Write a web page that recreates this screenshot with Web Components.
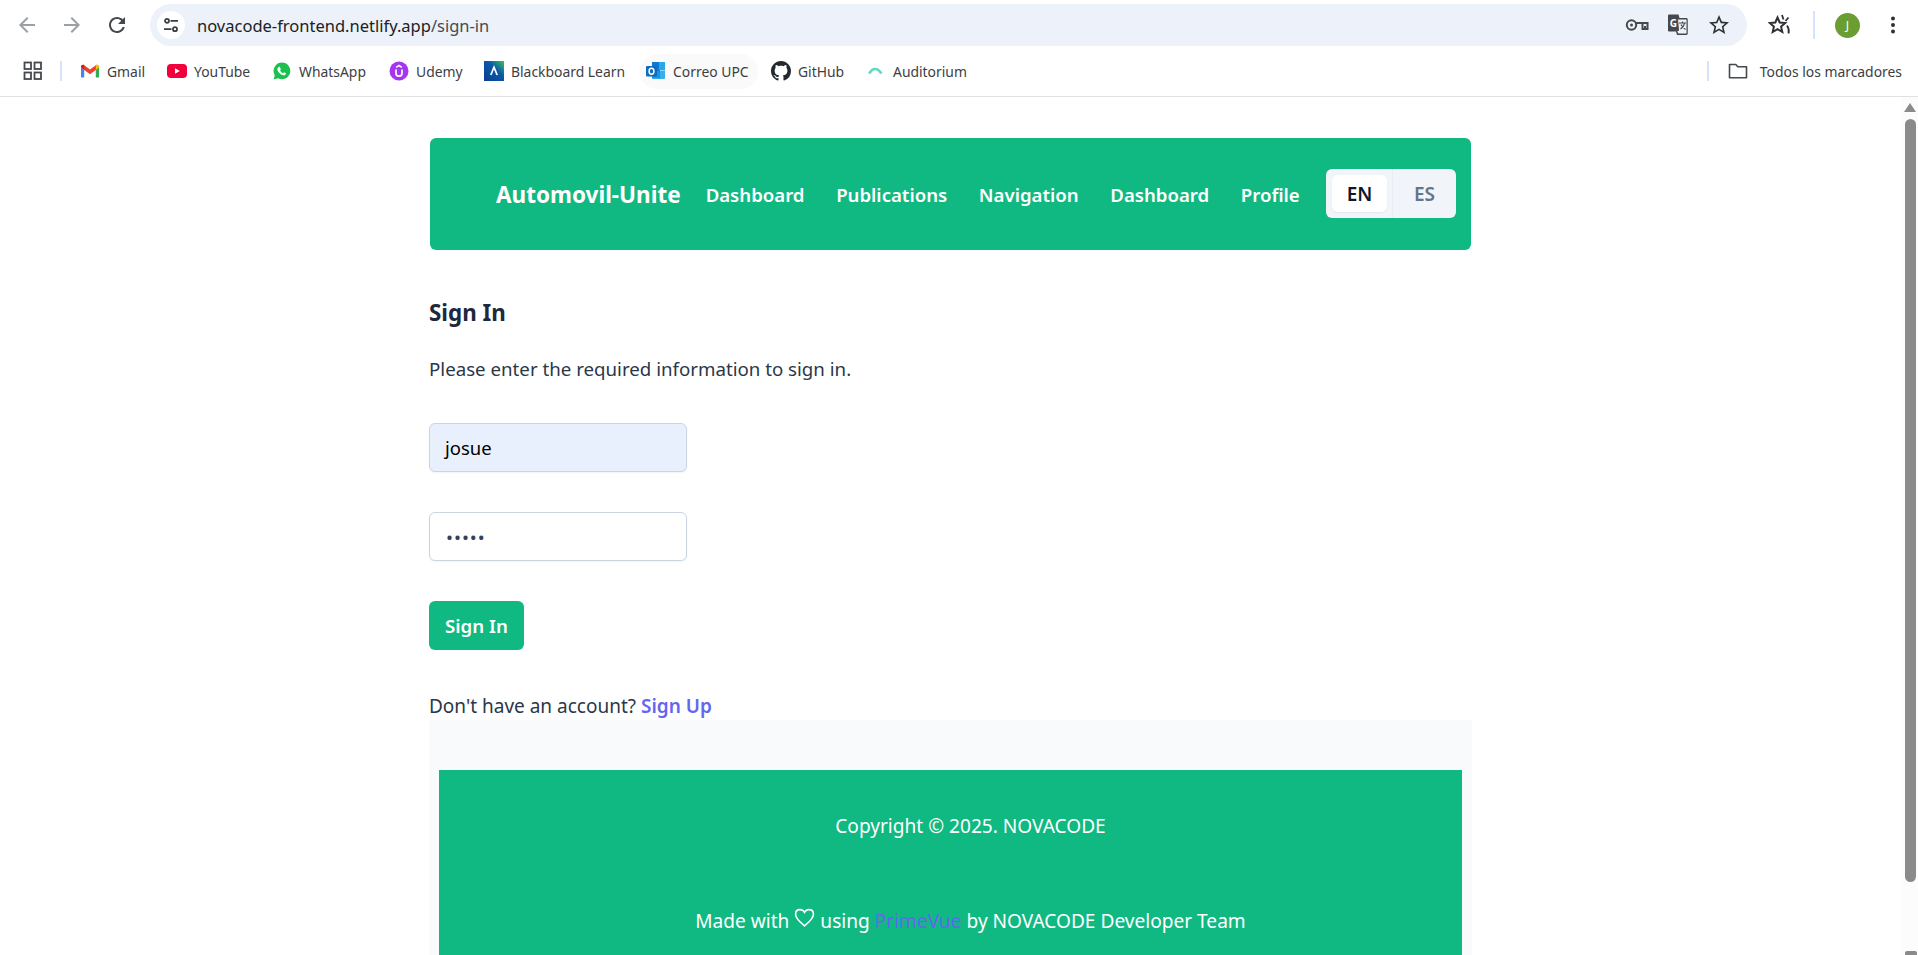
<!DOCTYPE html>
<html lang="en"><head><meta charset="utf-8"><title>Sign In</title>
<style>
html,body{margin:0;height:955px;overflow:hidden;background:#fff;font-family:"Noto Sans","Open Sans",sans-serif}
app-shell{height:955px}
</style></head><body>
<app-shell>
  <browser-chrome slot="chrome"></browser-chrome>
  <sign-in-page></sign-in-page>
</app-shell>
<script>
const def=(name,html,setup)=>customElements.define(name,class extends HTMLElement{
  constructor(){super();this.attachShadow({mode:'open'}).innerHTML=html;}
  connectedCallback(){if(setup)setup.call(this,this.shadowRoot);}
});
const P={
 back:'M20 11H7.83l5.59-5.59L12 4l-8 8 8 8 1.41-1.41L7.83 13H20v-2z',
 fwd:'M12 4l-1.41 1.41L16.17 11H4v2h12.17l-5.58 5.59L12 20l8-8z',
 reload:'M17.65 6.35C16.2 4.9 14.21 4 12 4c-4.42 0-7.99 3.58-7.99 8s3.57 8 7.99 8c3.73 0 6.84-2.55 7.73-6h-2.08c-.82 2.33-3.04 4-5.65 4-3.31 0-6-2.69-6-6s2.69-6 6-6c1.66 0 3.14.69 4.22 1.78L13 11h7V4l-2.35 2.35z',
 star:'M22 9.24l-7.19-.62L12 2 9.19 8.63 2 9.24l5.46 4.73L5.82 21 12 17.27 18.18 21l-1.63-7.03L22 9.24zM12 15.4l-3.76 2.27 1-4.28-3.32-2.88 4.38-.38L12 6.1l1.71 4.04 4.38.38-3.32 2.88 1 4.28L12 15.4z',
 gh:'M8 0C3.58 0 0 3.58 0 8c0 3.54 2.29 6.53 5.47 7.59.4.07.55-.17.55-.38 0-.19-.01-.82-.01-1.49-2.01.37-2.53-.49-2.69-.94-.09-.23-.48-.94-.82-1.13-.28-.15-.68-.52-.01-.53.63-.01 1.08.58 1.23.82.72 1.21 1.87.87 2.33.66.07-.52.28-.87.51-1.07-1.78-.2-3.64-.89-3.64-3.95 0-.87.31-1.59.82-2.15-.08-.2-.36-1.02.08-2.12 0 0 .67-.21 2.2.82.64-.18 1.32-.27 2-.27s1.36.09 2 .27c1.53-1.04 2.2-.82 2.2-.82.44 1.1.16 1.92.08 2.12.51.56.82 1.27.82 2.15 0 3.07-1.87 3.75-3.65 3.95.29.25.54.73.54 1.48 0 1.07-.01 1.93-.01 2.2 0 .21.15.46.55.38A8.01 8.01 0 0016 8c0-4.42-3.58-8-8-8z'
};
const ICONS={
 gmail:`<svg width="20" height="20" viewBox="0 0 20 20"><path d="M1 6v10.500h3.200V9z" fill="#4285f4"/><path d="M15.800 9v7.500H19V6z" fill="#34a853"/><path d="M1 6c0-2 2.200-2.900 3.600-1.600L10 8.600l5.400-4.200C16.800 3.100 19 4 19 6l-3.200 3-5.800 4.300L4.200 9z" fill="#ea4335"/><path d="M15.800 9V4.100c1.500-.8 3.200.2 3.200 1.900z" fill="#fbbc04"/><path d="M1 6c0-1.700 1.700-2.700 3.200-1.900V9z" fill="#c5221f"/></svg>`,
 yt:`<svg width="20" height="20" viewBox="0 0 20 20"><rect y="3" width="20" height="14" rx="4" fill="#f2003c"/><path d="M8 7.200v5.600l4.800-2.800z" fill="#fff"/></svg>`,
 wa:`<svg width="20" height="20" viewBox="0 0 20 20"><path d="M10 1.500a8.400 8.400 0 0 0-7.200 12.700L1.600 18.500l4.400-1.150A8.400 8.400 0 1 0 10 1.500z" fill="#1cc04f"/><path d="M7.300 5.800c-.3 0-.8.150-1.200.7-.5.600-.9 1.500-.6 2.700.5 1.700 2.600 4 4.900 4.900 1.200.45 2.200.2 2.900-.3.5-.4.8-1 .7-1.500l-2-1c-.25 0-.7.800-1 .9-1-.2-2.500-1.600-2.900-2.700 0-.3.700-.8.700-1.100l-.8-2.300c-.2-.3-.4-.3-.7-.3z" fill="#fff"/></svg>`,
 udemy:`<svg width="20" height="20" viewBox="0 0 20 20"><circle cx="10" cy="10" r="9.500" fill="#a435f0"/><path d="M7 8.500v3.700a3 3 0 0 0 6 0V8.500" fill="none" stroke="#fff" stroke-width="1.700"/><path d="M7.200 6.300 10 4.400l2.800 1.900" fill="none" stroke="#fff" stroke-width="1.500"/></svg>`,
 bb:`<svg width="20" height="20" viewBox="0 0 20 20"><defs><linearGradient id="bbg" x1="0" y1="1" x2="1" y2="0"><stop offset="0" stop-color="#0b3d91"/><stop offset=".6" stop-color="#0a5aa8"/><stop offset="1" stop-color="#3fc35a"/></linearGradient></defs><rect width="20" height="20" fill="url(#bbg)"/><path d="M6.800 14 10 6.200l3.200 7.800" fill="none" stroke="#fff" stroke-width="1.700"/></svg>`,
 outlook:`<svg width="20" height="20" viewBox="0 0 20 20"><rect x="6" y="1" width="8" height="8" fill="#0a78d4"/><rect x="13" y="1" width="6" height="8" fill="#28a8ea"/><rect x="6" y="9" width="8" height="8" fill="#0364b8"/><path d="M6 9.500h13V17a1 1 0 0 1-1 1H7a1 1 0 0 1-1-1z" fill="#14a0ec" opacity=".85"/><rect y="5" width="11" height="10.500" rx="1" fill="#0f6cbd"/><ellipse cx="5.500" cy="10.200" rx="2.400" ry="3" fill="none" stroke="#fff" stroke-width="1.500"/></svg>`,
 gh:`<svg width="20" height="20" viewBox="0 0 16 16"><path d="${P.gh}" fill="#24292f"/></svg>`,
 aud:`<svg width="20" height="20" viewBox="0 0 20 20"><path d="M3.200 12.500C4.800 9.800 6.600 8 9 8s4.700 1.800 6.400 4.500" fill="none" stroke="#5ed9c4" stroke-width="2.700"/></svg>`
};
const cssIcon=`svg{display:block;flex:none}`;

def('browser-chrome',`<style>
:host{display:block;height:97px;box-sizing:border-box;border-bottom:1px solid #dfe1e5;background:#fff;font-family:"Noto Sans",sans-serif;color:#3c4043}
${cssIcon}
.top{display:flex;align-items:center;height:48px;padding-top:2px;box-sizing:border-box}
.nav{display:flex;align-items:center;gap:21px;padding-left:15px;width:150px;box-sizing:border-box}
.omni{display:flex;align-items:center;width:1597px;height:42px;border-radius:21px;background:#edf1f9;flex:none;box-sizing:border-box}
.tune{width:28px;height:28px;margin-left:7px;border-radius:50%;background:#fff;display:flex;align-items:center;justify-content:center}
.url{margin-left:12px;font-size:16.500px;color:#202124;white-space:nowrap}
.url span{color:#474a4f}
.end{margin-left:auto;display:flex;align-items:center;gap:17px;padding-right:16px}
.right{display:flex;align-items:center;flex:1}
.marks{display:flex;align-items:center;gap:7px;height:46px;box-sizing:border-box}
.vsep{width:2px;height:20px;background:#d3e3fd;flex:none}
.all{margin-left:auto;display:flex;align-items:center;font-size:13.900px;color:#3c4043;padding-right:16px}
.all svg{margin:0 12px 0 19px}
</style>
<div class="top">
 <div class="nav">
  <svg width="24" height="24" viewBox="0 0 24 24" fill="#9aa0a6"><path d="${P.back}"/></svg>
  <svg width="24" height="24" viewBox="0 0 24 24" fill="#9aa0a6"><path d="${P.fwd}"/></svg>
  <svg width="24" height="24" viewBox="0 0 24 24" fill="#45484c"><path d="${P.reload}"/></svg>
 </div>
 <div class="omni">
  <div class="tune"><svg width="20" height="20" viewBox="0 0 20 20" fill="none" stroke="#3c4043" stroke-width="1.800"><circle cx="6" cy="5.800" r="2"/><path d="M9.500 5.800H17M3 14.200h7.500"/><circle cx="14" cy="14.200" r="2"/></svg></div>
  <div class="url">novacode-frontend.netlify.app<span>/sign-in</span></div>
  <div class="end">
   <svg width="24" height="24" viewBox="0 0 24 24" fill="none" stroke="#45484c" stroke-width="2"><circle cx="6.500" cy="12" r="4.700"/><circle cx="6.500" cy="12" r="1.500" fill="#45484c" stroke="none"/><path d="M11 10h11.500v6h-5v-6M20 13v3"/></svg>
   <svg width="24" height="24" viewBox="0 0 24 24"><path d="M3 1.500h9.500l1 3.500h7a1 1 0 0 1 1 1v15a1 1 0 0 1-1 1H11l-1-3.500H3a1 1 0 0 1-1-1v-15a1 1 0 0 1 1-1z" fill="#45484c"/><path d="M11.500 6h9.500v15h-9l-1.500-3.500h2z" fill="#edf1f9" stroke="#45484c" stroke-width="1"/><text x="3.800" y="13.500" font-size="10" font-weight="700" font-family="Noto Sans" fill="#fff">G</text><path d="M13 10h7M16.500 8.500V10M14.500 16c2.500-1.500 3.600-3.500 4-6M15 11.500c1 2 2.500 3.500 4.500 5" fill="none" stroke="#45484c" stroke-width="1.100"/></svg>
   <svg width="24" height="24" viewBox="0 0 24 24" fill="#303134"><path d="${P.star}"/></svg>
  </div>
 </div>
 <div class="right">
  <svg style="margin-left:21px" width="24" height="24" viewBox="0 0 24 24" fill="none" stroke="#303134" stroke-width="2" stroke-linejoin="miter"><path d="M9.500 4.500l2.200 5 5.500.5-4.100 3.600 1.200 5.400-4.800-2.900-4.800 2.900 1.200-5.400L1.800 10l5.500-.5z"/><path d="M14 2l1.500 4.500M20.500 4.500l-3 3.500M19 12.500c1.500 2 2.200 5 1.600 8" stroke-width="1.800"/></svg>
  <div style="width:2px;height:28px;background:#d3e3fd;margin-left:21px"></div>
  <div style="width:25px;height:25px;border-radius:50%;background:#6a9e33;color:#fff;font-size:12px;display:flex;align-items:center;justify-content:center;margin-left:20px">J</div>
  <svg style="margin-left:21px" width="24" height="24" viewBox="0 0 24 24" fill="#303134"><circle cx="12" cy="5.500" r="2"/><circle cx="12" cy="12" r="2"/><circle cx="12" cy="18.500" r="2"/></svg>
 </div>
</div>
<div class="marks">
 <svg style="margin-left:23px" width="20" height="20" viewBox="0 0 20 20" fill="none" stroke="#45484c" stroke-width="1.800"><rect x="1.500" y="1.500" width="6.500" height="6.500"/><rect x="11.500" y="1.500" width="6.500" height="6.500"/><rect x="1.500" y="11.500" width="6.500" height="6.500"/><rect x="11.500" y="11.500" width="6.500" height="6.500"/></svg>
 <div class="vsep" style="margin:0 5px 0 10px"></div>
 <bookmark-item icon="gmail" w="80">Gmail</bookmark-item>
 <bookmark-item icon="yt" w="98">YouTube</bookmark-item>
 <bookmark-item icon="wa" w="110">WhatsApp</bookmark-item>
 <bookmark-item icon="udemy" w="88">Udemy</bookmark-item>
 <bookmark-item icon="bb" w="155">Blackboard Learn</bookmark-item>
 <bookmark-item icon="outlook" w="118" hover>Correo UPC</bookmark-item>
 <bookmark-item icon="gh" w="88">GitHub</bookmark-item>
 <bookmark-item icon="aud" w="108">Auditorium</bookmark-item>
 <div class="all">
  <div class="vsep"></div>
  <svg width="20" height="20" viewBox="0 0 20 20" fill="none" stroke="#45484c" stroke-width="1.600"><path d="M1.500 3.500h6.300l2 2.200h8.700v11h-17z" stroke-linejoin="round"/></svg>
  <span>Todos los marcadores</span>
 </div>
</div>`);

def('bookmark-item',`<style>
:host{display:flex;align-items:center;flex:none;box-sizing:border-box;height:35px;padding-left:6px;border-radius:18px;font-size:13.900px;color:#3c4043;white-space:nowrap}
:host([hover]){background:#fafafa}
${cssIcon}
.t{margin-left:7px}
</style><span id="i"></span><span class="t"><slot></slot></span>`,function(r){
  r.getElementById('i').innerHTML=ICONS[this.getAttribute('icon')];
  this.style.width=this.getAttribute('w')+'px';
});

def('lang-switch',`<style>
:host{display:flex;align-items:stretch;box-sizing:border-box;width:130px;height:49px;background:#f1f5f9;border-radius:6px;font-size:19px;font-weight:600;color:#64748b}
div{display:flex;align-items:center;justify-content:center;padding-top:2px;box-sizing:border-box}
.on{width:55px;margin:6px 5px 6px 6px;background:#fff;color:#0f172a;border-radius:6px;box-shadow:0 1px 2px rgba(0,0,0,.06)}
.off{flex:1;border-left:1px solid #e8edf3}
</style><div class="on">EN</div><div class="off">ES</div>`);

def('app-navbar',`<style>
:host{display:flex;align-items:center;box-sizing:border-box;height:112px;margin:0 1px;background:#10b981;border-radius:6px;padding:0 15px 0 66px;color:#fff;white-space:nowrap}
.brand{font-size:22.500px;font-weight:700}
nav{display:flex;gap:31.700px;margin-left:25px;font-size:18.600px;font-weight:600}
lang-switch{margin-left:auto;margin-bottom:2px}
</style><div class="brand">Automovil-Unite</div>
<nav><span>Dashboard</span><span>Publications</span><span>Navigation</span><span>Dashboard</span><span>Profile</span></nav>
<lang-switch></lang-switch>`);

def('text-field',`<style>
:host{display:flex;align-items:center;box-sizing:border-box;width:258px;height:49px;padding:0 15px;background:#fff;border:1px solid #cbd5e1;border-radius:6px;box-shadow:0 1px 2px rgba(18,18,23,.05);font-size:18.500px;color:#000}
:host([autofilled]){background:#e8f0fe}
:host([secret]){color:#334155;letter-spacing:1px;padding-left:16px}
</style><slot></slot>`);

def('sign-in-form',`<style>
:host{display:block;color:#2a3749}
h2{margin:48px 0 0;font-size:22.400px;line-height:30px;font-weight:700;color:#1e293b}
p{margin:29px 0 0;font-size:18.700px;line-height:24px}
text-field{margin-top:40px}
text-field.first{margin-top:42px}
button{display:block;margin-top:40px;width:95px;height:49px;border:0;border-radius:6px;background:#10b981;color:#fff;font:600 18.700px "Noto Sans",sans-serif;padding:0}
.alt{margin-top:44px;font-size:19px;line-height:24px}
a{color:#6366f1;font-weight:600;text-decoration:none}
</style>
<h2>Sign In</h2>
<p>Please enter the required information to sign in.</p>
<text-field class="first" autofilled>josue</text-field>
<text-field secret>•••••</text-field>
<button type="button">Sign In</button>
<div class="alt">Don't have an account? <a href="#">Sign Up</a></div>`);

def('app-footer',`<style>
:host{display:block;margin-top:2px;background:#f8fafc;padding:50px 10px 0;height:240px;box-sizing:border-box}
.g{background:#10b981;color:#fff;height:100%;padding:44px 0 0 40px;box-sizing:border-box;text-align:center;font-size:19.100px;line-height:24px}
.made{margin-top:69px;height:24px}
svg{display:inline-block;vertical-align:0}
a{color:#6366f1;text-decoration:none}
</style>
<div class="g"><div>Copyright © 2025. NOVACODE</div>
<div class="made">Made with <svg width="21" height="21" viewBox="0 0 20 20" fill="none" stroke="#fff" stroke-width="1.500"><path d="M10 18C6 14.500 1.500 11 1.500 6.800 1.500 4 3.500 2.500 5.700 2.500 7.500 2.500 9 3.500 10 5.200 11 3.500 12.500 2.500 14.300 2.500 16.500 2.500 18.500 4 18.500 6.800 18.500 11 14 14.500 10 18z"/></svg> using <a href="#">PrimeVue</a> by NOVACODE Developer Team</div></div>`);

def('page-scrollbar',`<style>
:host{display:block;flex:none;width:17px;background:#fcfcfc}
div{margin-left:4px;background:#8a8a8a}
.up{width:0;height:0;margin:6px 0 0 3px;background:none;border:6px solid transparent;border-top:0;border-bottom:9px solid #8a8a8a}
.thumb{width:11px;height:763px;margin-top:7px;border-radius:6px}
.down{width:12px;height:4px;margin-top:69px;border-radius:2px 2px 0 0}
</style><div class="up"></div><div class="thumb"></div><div class="down"></div>`);

def('sign-in-page',`<style>
:host{display:flex;height:858px;overflow:hidden}
main{flex:1;min-width:0;overflow:hidden}
.c{width:1043px;margin:0 auto;padding-top:41px}
</style>
<main><div class="c"><app-navbar></app-navbar><sign-in-form></sign-in-form><app-footer></app-footer></div></main>
<page-scrollbar></page-scrollbar>`);

def('app-shell',`<style>:host{display:flex;flex-direction:column}</style><slot name="chrome"></slot><slot></slot>`);
</script>
</body></html>
